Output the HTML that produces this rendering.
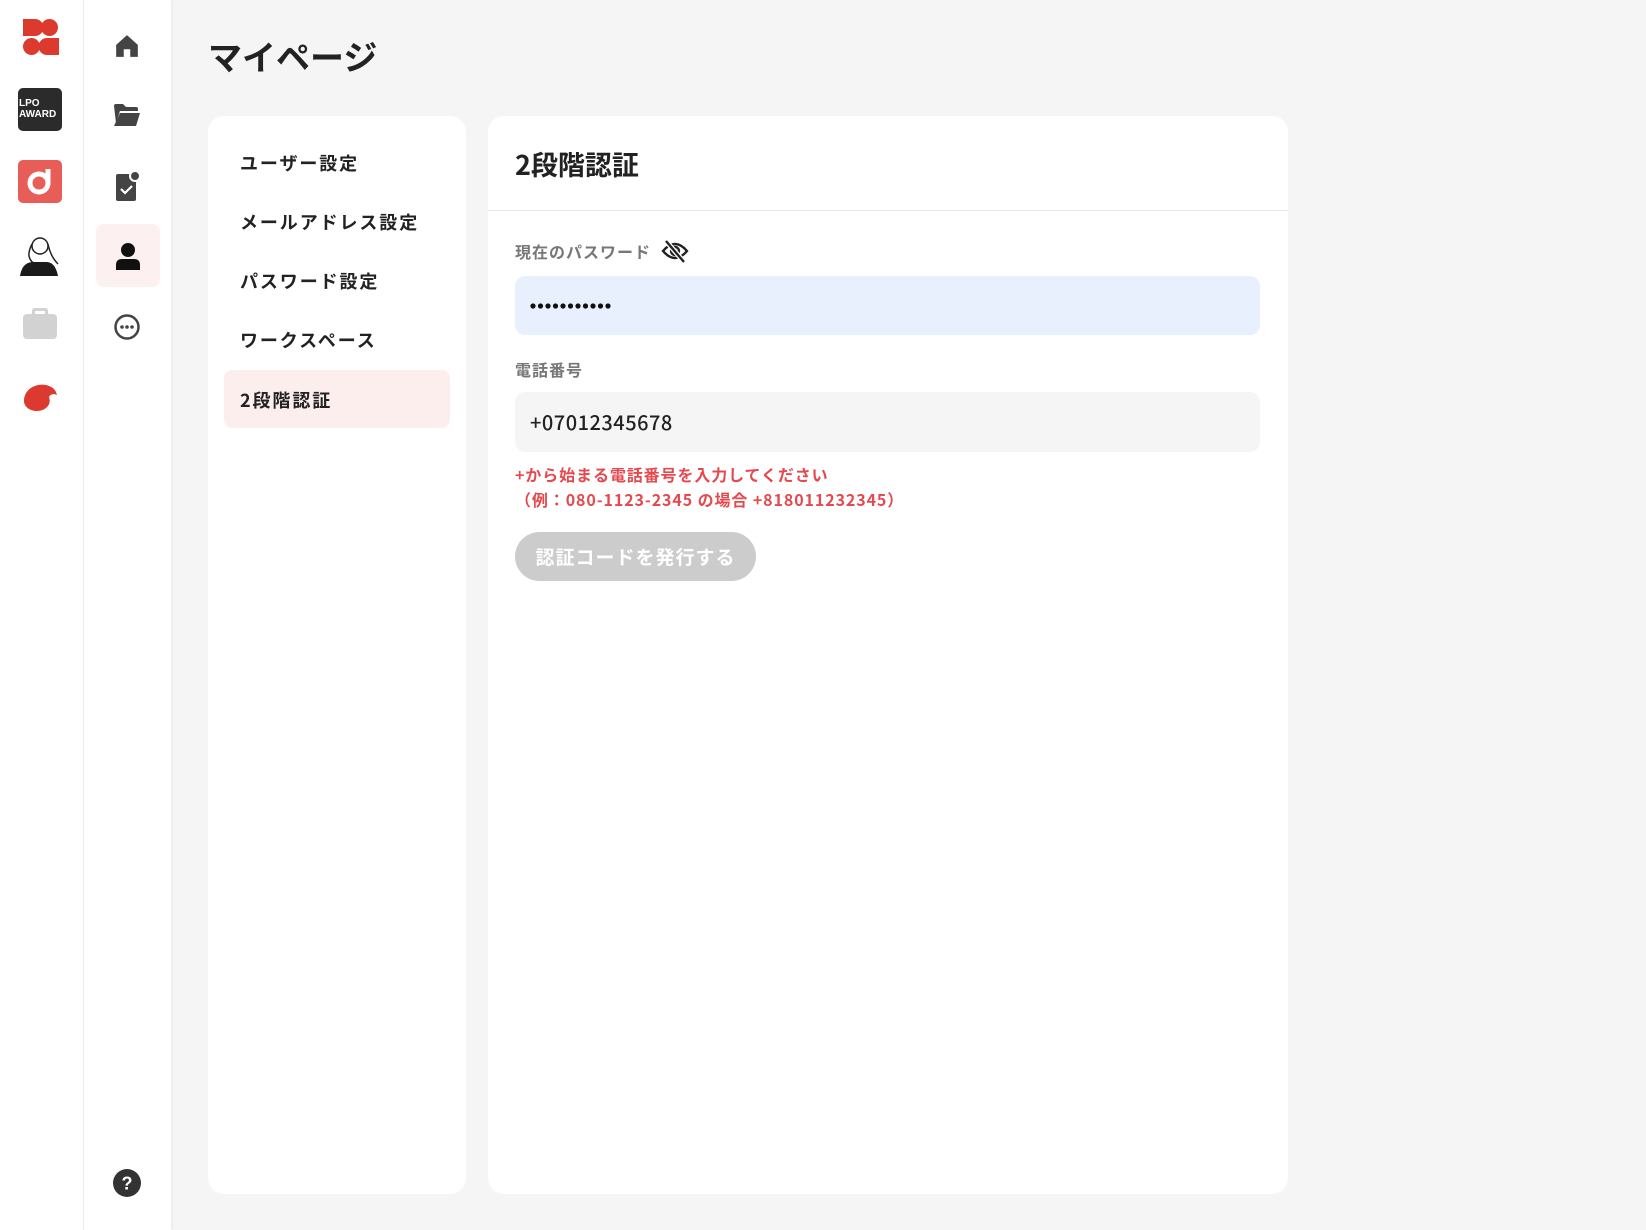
<!DOCTYPE html>
<html><head><meta charset="utf-8"><style>
*{box-sizing:border-box;margin:0;padding:0}
body{width:1646px;height:1230px;background:#f5f5f5;font-family:"Noto Sans CJK JP","Liberation Sans",sans-serif;position:relative;overflow:hidden;color:#222}
.r1{position:absolute;left:0;top:0;width:84px;height:1230px;background:#fff;border-right:1px solid #eee}
.r2{position:absolute;left:84px;top:0;width:87px;height:1230px;background:#fff;box-shadow:1px 0 3px rgba(0,0,0,.06)}
.a{position:absolute}
h1{position:absolute;left:208px;top:32px;font-size:34px;font-weight:700;color:#222;letter-spacing:0;line-height:48px}
.card{position:absolute;background:#fff;border-radius:16px}
.nav{position:absolute;left:240px;font-size:18px;font-weight:700;color:#222;letter-spacing:1.9px;line-height:26px}
.lbl{position:absolute;left:515px;font-size:16px;color:#777;font-weight:700;letter-spacing:1px;line-height:22px}
.err{position:absolute;left:515px;font-size:16px;color:#e5484d;font-weight:700;letter-spacing:.9px;line-height:22px}
</style></head><body>
<div class="r1"></div><div class="r2"></div>
<svg class="a" style="left:22px;top:18px" width="38" height="38" viewBox="0 0 38 38"><path d="M1 1h12a8 8 0 0 1 0 17H1z" fill="#dc3a2e"/><circle cx="27.5" cy="9.5" r="8.5" fill="#dc3a2e"/><circle cx="9.5" cy="28.5" r="8.5" fill="#dc3a2e"/><path d="M37 37H25a8 8 0 0 1 0-17h12z" fill="#dc3a2e"/></svg>
<div class="a" style="left:18px;top:88px;width:44px;height:43px;background:#2b2b2b;border-radius:5px;color:#fff;font-family:'Liberation Sans';font-size:10px;font-weight:700;line-height:11px;padding:10px 0 0 1px">LPO<br>AWARD</div>
<div class="a" style="left:18px;top:160px;width:44px;height:43px;background:#e85d58;border-radius:5px"><svg width="44" height="43"><circle cx="21" cy="23" r="9" fill="none" stroke="#fff" stroke-width="5"/><path d="M30 23V9" stroke="#fff" stroke-width="5"/></svg></div>
<svg class="a" style="left:18px;top:232px" width="44" height="44"><circle cx="22" cy="14" r="8" fill="none" stroke="#222" stroke-width="1.5"/><path d="M14 12c-4 8-6 16 6 22 M30 12c2 10 6 16 10 20" fill="none" stroke="#222" stroke-width="1.5"/><path d="M2 44c2-12 8-14 14-14h12c6 0 10 4 12 14z" fill="#1a1a1a"/></svg>
<div class="a" style="left:23px;top:314px;width:34px;height:25px;background:#d2d2d2;border-radius:4px"></div>
<div class="a" style="left:32px;top:308px;width:16px;height:10px;border:3px solid #d2d2d2;border-bottom:0;border-radius:3px 3px 0 0"></div>
<svg class="a" style="left:22px;top:383px" width="36" height="30"><path d="M2 18C2 6 14 0 24 2c8 2 10 6 11 10-4-2-7 0-8 2 3 8-4 14-12 14C8 28 2 24 2 18z" fill="#dc3a2e"/></svg>
<svg class="a" style="left:114px;top:33px" width="26" height="26" viewBox="0 0 24 24"><path d="M12 2 2 11v11h7v-7h6v7h7V11z" fill="#444"/></svg>
<svg class="a" style="left:113px;top:103px" width="28" height="24" viewBox="0 0 28 24"><path d="M1 3q0-2 2-2h7l3 3h10q2 0 2 2v2H7L3 20z" fill="#444"/><path d="M7 10h20L23 23H1z" fill="#444"/></svg>
<svg class="a" style="left:115px;top:170px" width="26" height="32"><rect x="1" y="4" width="20" height="27" rx="2" fill="#444"/><circle cx="20" cy="6" r="5" fill="#444" stroke="#fff" stroke-width="2"/><path d="M6 19l4 4 7-7" stroke="#fff" stroke-width="2.2" fill="none"/></svg>
<div class="a" style="left:96px;top:224px;width:64px;height:63px;background:#fdf0f0;border-radius:8px"></div>
<svg class="a" style="left:115px;top:242px" width="26" height="28"><circle cx="13" cy="8" r="7" fill="#111"/><path d="M1 28v-5q0-6 6-6h12q6 0 6 6v5z" fill="#111"/></svg>
<svg class="a" style="left:113px;top:313px" width="28" height="28"><circle cx="14" cy="14" r="11.5" fill="none" stroke="#444" stroke-width="2.5"/><circle cx="9" cy="14" r="1.8" fill="#444"/><circle cx="14" cy="14" r="1.8" fill="#444"/><circle cx="19" cy="14" r="1.8" fill="#444"/></svg>
<svg class="a" style="left:113px;top:1169px" width="28" height="28"><circle cx="14" cy="14" r="14" fill="#333"/><text x="14" y="20.5" font-size="18" font-weight="700" fill="#fff" text-anchor="middle" font-family="Liberation Sans">?</text></svg>
<h1>マイページ</h1>
<div class="card" style="left:208px;top:116px;width:258px;height:1078px"></div>
<div class="a" style="left:224px;top:370px;width:226px;height:58px;background:#fdeeee;border-radius:8px"></div>
<div class="nav" style="top:150px">ユーザー設定</div>
<div class="nav" style="top:209px">メールアドレス設定</div>
<div class="nav" style="top:268px">パスワード設定</div>
<div class="nav" style="top:327px">ワークスペース</div>
<div class="nav" style="top:387px">2段階認証</div>
<div class="card" style="left:488px;top:116px;width:800px;height:1078px"></div>
<div class="a" style="left:488px;top:210px;width:800px;height:1px;background:#e8e8e8"></div>
<div class="a" style="left:515px;top:145px;font-size:27px;font-weight:700;line-height:38px">2段階認証</div>
<div class="lbl" style="top:240px">現在のパスワード</div>
<svg class="a" style="left:661px;top:238px" width="28" height="26" viewBox="0 0 28 26"><path d="M2 13q12-14 24 0-12 14-24 0z" fill="none" stroke="#222" stroke-width="2.4"/><circle cx="14" cy="13" r="4" fill="none" stroke="#222" stroke-width="2.4"/><path d="M5 3l18 21" stroke="#fff" stroke-width="5"/><path d="M5 3l18 21" stroke="#222" stroke-width="2.4"/></svg>
<div class="a" style="left:515px;top:276px;width:745px;height:59px;background:#e8f0fe;border-radius:10px"><svg class="a" style="left:15px;top:25px" width="90" height="10"><g fill="#111"><circle cx="3" cy="5" r="2.6"/><circle cx="10.5" cy="5" r="2.6"/><circle cx="18" cy="5" r="2.6"/><circle cx="25.5" cy="5" r="2.6"/><circle cx="33" cy="5" r="2.6"/><circle cx="40.5" cy="5" r="2.6"/><circle cx="48" cy="5" r="2.6"/><circle cx="55.5" cy="5" r="2.6"/><circle cx="63" cy="5" r="2.6"/><circle cx="70.5" cy="5" r="2.6"/><circle cx="78" cy="5" r="2.6"/></g></svg></div>
<div class="lbl" style="top:358px">電話番号</div>
<div class="a" style="left:515px;top:392px;width:745px;height:60px;background:#f5f5f5;border-radius:10px;padding:0 0 0 15px;font-size:20px;line-height:60px;color:#222;font-weight:500;letter-spacing:.5px">+07012345678</div>
<div class="err" style="top:463px">+から始まる電話番号を入力してください</div>
<div class="err" style="top:488px">（例：080-1123-2345 の場合 +818011232345）</div>
<div class="a" style="left:515px;top:532px;width:241px;height:49px;background:#cccccc;border-radius:25px;color:#fff;font-size:19px;font-weight:700;text-align:center;line-height:49px;letter-spacing:1px">認証コードを発行する</div>
</body></html>
